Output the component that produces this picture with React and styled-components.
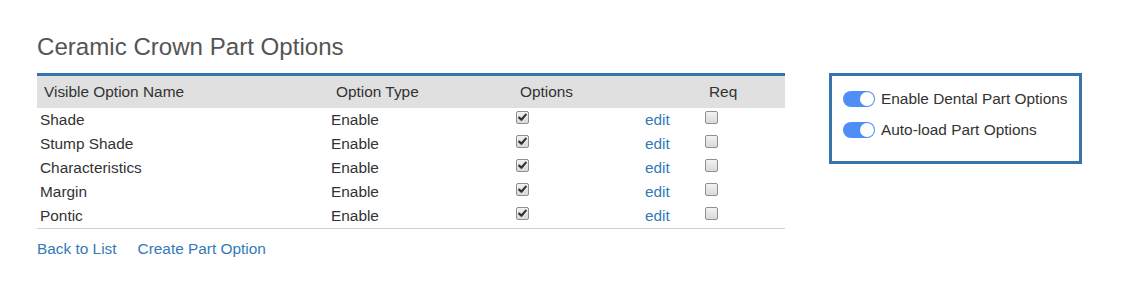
import React from "react";
import styled, { createGlobalStyle } from "styled-components";

const Global = createGlobalStyle`
  html, body { margin: 0; padding: 0; background: #fff; }
  body { font-family: "Liberation Sans", Arial, Helvetica, sans-serif; font-size: 15.4px; color: #333; }
`;

const Page = styled.div`
  display: flex;
  align-items: flex-start;
  gap: 44px;
  padding: 34px 0 0 37px;
`;

const Main = styled.div`
  width: 748px;
`;

const Title = styled.h3`
  margin: 0 0 13px 0;
  font-size: 24.1px;
  line-height: 26.4px;
  font-weight: 400;
  color: #555;
`;

const Table = styled.div`
  display: grid;
  grid-template-columns: 292px 184px 129px 60px 83px;
  border-top: 3px solid #3873ab;
  border-bottom: 1px solid #cfcfcf;
`;

const Th = styled.div`
  background: #e0e0e0;
  height: 32px;
  line-height: 32px;
  padding-left: 7px;
  color: #333;
`;

const Td = styled.div`
  height: 24px;
  line-height: 24px;
  padding-left: ${(p) => (p.$tight ? "2px" : "3px")};
  color: #333;
`;

const Link = styled.a`
  color: #337ab7;
  text-decoration: none;
  cursor: pointer;
`;

const BoxWrap = styled.span`
  display: inline-block;
  width: 11px;
  height: 11px;
  margin-top: 3px;
  border: 1px solid #8e8e8e;
  border-radius: 2px;
  background: linear-gradient(#f2f2f2, #d9d9d9);
  box-sizing: content-box;
  position: relative;
  vertical-align: top;
`;

const CheckSvg = styled.svg`
  position: absolute;
  left: 0;
  top: 0;
`;

const Checkbox = ({ checked }) => (
  <BoxWrap>
    {checked && (
      <CheckSvg width="11" height="11" viewBox="0 0 11 11">
        <path d="M2.2 5.6 L4.4 7.8 L8.8 2.6" fill="none" stroke="#333" strokeWidth="2.2" strokeLinecap="round" strokeLinejoin="round" />
      </CheckSvg>
    )}
  </BoxWrap>
);

const Footer = styled.div`
  display: flex;
  gap: 21px;
  margin-top: 9px;
  line-height: 21px;
`;

const Panel = styled.div`
  box-sizing: border-box;
  width: 253px;
  height: 91px;
  margin-top: 39px;
  border: 3px solid #3873ab;
  padding: 13px 0 0 11px;
  display: flex;
  flex-direction: column;
  gap: 11px;
`;

const ToggleRow = styled.label`
  display: flex;
  align-items: center;
  gap: 6px;
  height: 20px;
  line-height: 20px;
  font-size: 15.4px;
  color: #333;
`;

const Toggle = styled.span`
  display: inline-block;
  position: relative;
  width: 32px;
  height: 16px;
  border-radius: 8px;
  background: ${(p) => (p.$on ? "#4f8ef6" : "#ccc")};
  flex: none;
  &::after {
    content: "";
    position: absolute;
    top: 1px;
    left: ${(p) => (p.$on ? "17px" : "1px")};
    width: 14px;
    height: 14px;
    border-radius: 50%;
    background: #fff;
  }
`;

const rows = ["Shade", "Stump Shade", "Characteristics", "Margin", "Pontic"];

export default function App() {
  return (
    <>
      <Global />
      <Page>
        <Main>
          <Title>Ceramic Crown Part Options</Title>
          <Table>
            <Th>Visible Option Name</Th>
            <Th>Option Type</Th>
            <Th>Options</Th>
            <Th />
            <Th>Req</Th>
            {rows.map((r) => (
              <React.Fragment key={r}>
                <Td>{r}</Td>
                <Td $tight>Enable</Td>
                <Td>
                  <Checkbox checked />
                </Td>
                <Td>
                  <Link>edit</Link>
                </Td>
                <Td>
                  <Checkbox />
                </Td>
              </React.Fragment>
            ))}
          </Table>
          <Footer>
            <Link>Back to List</Link>
            <Link>Create Part Option</Link>
          </Footer>
        </Main>
        <Panel>
          <ToggleRow>
            <Toggle $on />
            Enable Dental Part Options
          </ToggleRow>
          <ToggleRow>
            <Toggle $on />
            Auto-load Part Options
          </ToggleRow>
        </Panel>
      </Page>
    </>
  );
}
